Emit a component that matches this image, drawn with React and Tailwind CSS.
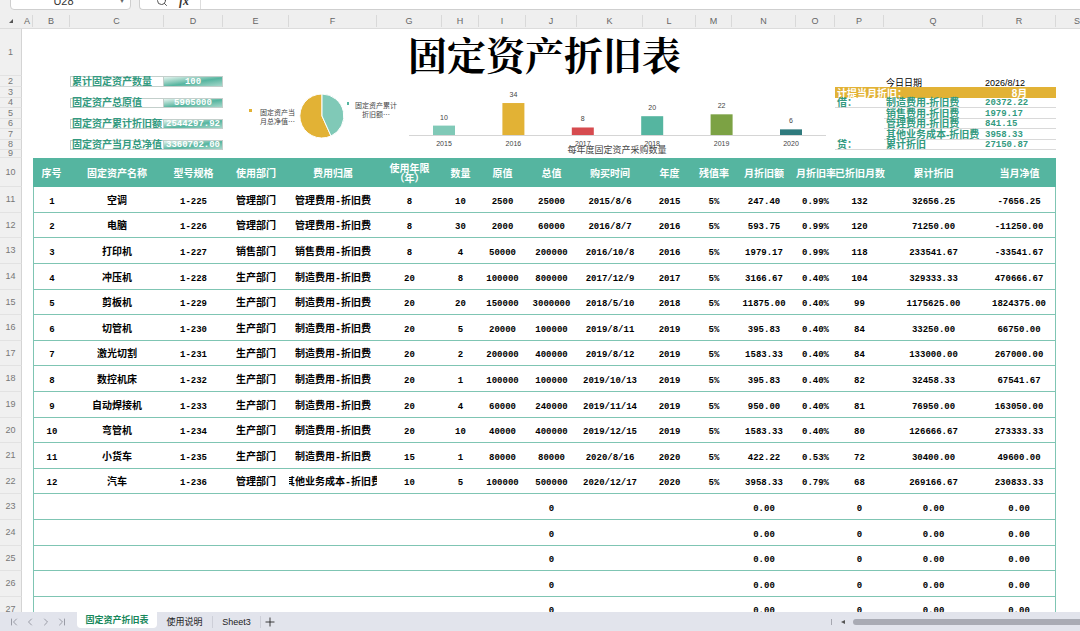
import { ChevronFirst, ChevronLast, ChevronLeft, ChevronRight, Plus, Search } from 'lucide-react'
import clsx from 'clsx'

const columns = [
  { letter: 'A', width: 'w-[11px]' },
  { letter: 'B', width: 'w-[37px]' },
  { letter: 'C', width: 'w-[94px]' },
  { letter: 'D', width: 'w-[59px]' },
  { letter: 'E', width: 'w-[66px]' },
  { letter: 'F', width: 'w-[88px]' },
  { letter: 'G', width: 'w-[65px]' },
  { letter: 'H', width: 'w-[37px]' },
  { letter: 'I', width: 'w-[47px]' },
  { letter: 'J', width: 'w-[51px]' },
  { letter: 'K', width: 'w-[66px]' },
  { letter: 'L', width: 'w-[53px]' },
  { letter: 'M', width: 'w-[36px]' },
  { letter: 'N', width: 'w-[64px]' },
  { letter: 'O', width: 'w-[39px]' },
  { letter: 'P', width: 'w-[49px]' },
  { letter: 'Q', width: 'w-[99px]' },
  { letter: 'R', width: 'w-[73px]' },
  { letter: 'S', width: 'w-[24px]' },
]

const headings = [
  '序号', '固定资产名称', '型号规格', '使用部门', '费用归属', '使用年限（年）', '数量', '原值', '总值',
  '购买时间', '年度', '残值率', '月折旧额', '月折旧率', '已折旧月数', '累计折旧', '当月净值',
]

const blank = ['', '', '', '', '', '', '', '', '0', '', '', '', '0.00', '', '0', '0.00', '0.00']

const assets = [
  ['1', '空调', '1-225', '管理部门', '管理费用-折旧费', '8', '10', '2500', '25000', '2015/8/6', '2015', '5%', '247.40', '0.99%', '132', '32656.25', '-7656.25'],
  ['2', '电脑', '1-226', '管理部门', '管理费用-折旧费', '8', '30', '2000', '60000', '2016/8/7', '2016', '5%', '593.75', '0.99%', '120', '71250.00', '-11250.00'],
  ['3', '打印机', '1-227', '销售部门', '销售费用-折旧费', '8', '4', '50000', '200000', '2016/10/8', '2016', '5%', '1979.17', '0.99%', '118', '233541.67', '-33541.67'],
  ['4', '冲压机', '1-228', '生产部门', '制造费用-折旧费', '20', '8', '100000', '800000', '2017/12/9', '2017', '5%', '3166.67', '0.40%', '104', '329333.33', '470666.67'],
  ['5', '剪板机', '1-229', '生产部门', '制造费用-折旧费', '20', '20', '150000', '3000000', '2018/5/10', '2018', '5%', '11875.00', '0.40%', '99', '1175625.00', '1824375.00'],
  ['6', '切管机', '1-230', '生产部门', '制造费用-折旧费', '20', '5', '20000', '100000', '2019/8/11', '2019', '5%', '395.83', '0.40%', '84', '33250.00', '66750.00'],
  ['7', '激光切割', '1-231', '生产部门', '制造费用-折旧费', '20', '2', '200000', '400000', '2019/8/12', '2019', '5%', '1583.33', '0.40%', '84', '133000.00', '267000.00'],
  ['8', '数控机床', '1-232', '生产部门', '制造费用-折旧费', '20', '1', '100000', '100000', '2019/10/13', '2019', '5%', '395.83', '0.40%', '82', '32458.33', '67541.67'],
  ['9', '自动焊接机', '1-233', '生产部门', '制造费用-折旧费', '20', '4', '60000', '240000', '2019/11/14', '2019', '5%', '950.00', '0.40%', '81', '76950.00', '163050.00'],
  ['10', '弯管机', '1-234', '生产部门', '制造费用-折旧费', '20', '10', '40000', '400000', '2019/12/15', '2019', '5%', '1583.33', '0.40%', '80', '126666.67', '273333.33'],
  ['11', '小货车', '1-235', '生产部门', '制造费用-折旧费', '15', '1', '80000', '80000', '2020/8/16', '2020', '5%', '422.22', '0.53%', '72', '30400.00', '49600.00'],
  ['12', '汽车', '1-236', '管理部门', '其他业务成本-折旧费', '10', '5', '100000', '500000', '2020/12/17', '2020', '5%', '3958.33', '0.79%', '68', '269166.67', '230833.33'],
  blank, blank, blank, blank, blank,
]

// rows 2 to 9: totals on the left, journal entry on the right
const summaryRows = [
  { row: 2, height: 'h-[11px]', label: '累计固定资产数量', total: '100' },
  { row: 3, height: 'h-[11px]' },
  { row: 4, height: 'h-[10px]', label: '固定资产总原值', total: '5905000', side: '借：', account: '制造费用-折旧费', amount: '20372.22' },
  { row: 5, height: 'h-[11px]', account: '销售费用-折旧费', amount: '1979.17' },
  { row: 6, height: 'h-[10px]', label: '固定资产累计折旧额', total: '2544297.92', account: '管理费用-折旧费', amount: '841.15' },
  { row: 7, height: 'h-[11px]', account: '其他业务成本-折旧费', amount: '3958.33' },
  { row: 8, height: 'h-[10px]', label: '固定资产当月总净值', total: '3360702.00', side: '贷：', account: '累计折旧', amount: '27150.87' },
  { row: 9, height: 'h-[8px]' },
]

const purchases = [
  { year: '2015', count: 10, color: '#80c9b7' },
  { year: '2016', count: 34, color: '#e2b235' },
  { year: '2017', count: 8, color: '#d64b4f' },
  { year: '2018', count: 20, color: '#55b5a0' },
  { year: '2019', count: 22, color: '#7ca244' },
  { year: '2020', count: 6, color: '#2f7a7d' },
]

function RowNumber({ children }) {
  return (
    <th scope="row" className="border-r border-b border-r-[#d4d4d4] border-b-[#e2e2e2] bg-[#f0f0f0] text-[9px] leading-[7px] font-normal text-[#777]">
      {children}
    </th>
  )
}

function PieChart() {
  return (
    <svg viewBox="0 0 186 80" className="h-20 w-[186px] shrink-0" fontSize="7" fill="#444">
      <path d="M99 40V18A22 22 0 1 0 108 60Z" fill="#e2b235" stroke="#fff" />
      <path d="M99 40V18A22 22 0 0 1 108 60Z" fill="#80c9b7" stroke="#fff" />
      <rect x="26" y="33" width="3" height="3" fill="#e2b235" />
      <text x="37" y="39">固定资产当</text>
      <text x="37" y="48">月总净值⋯</text>
      <rect x="124" y="26" width="2" height="3" fill="#55b5a0" />
      <text x="132" y="32">固定资产累计</text>
      <text x="139" y="41">折旧额⋯</text>
    </svg>
  )
}

function BarChart() {
  return (
    <svg viewBox="0 0 426 80" className="h-20 min-w-0 flex-1" fill="#444" textAnchor="middle">
      <path d="M0 59.5H417" stroke="#d5d5d5" />
      {purchases.map(({ year, count, color }, i) => {
        const x = 35 + i * 69.4
        const height = count * 0.94
        return (
          <g key={year} fontSize="7">
            <rect x={x - 11} y={59 - height} width="22" height={height} fill={color} />
            <text x={x} y={53 - height}>{count}</text>
            <text x={x} y="70">{year}</text>
          </g>
        )
      })}
      <text x="208" y="77" fontSize="9">每年度固定资产采购数量</text>
    </svg>
  )
}

function SummaryRow({ row, height, label, total, side, account, amount }) {
  return (
    <tr className={clsx(height, 'text-[10px] leading-[8px] font-bold whitespace-nowrap text-[#339a80]')}>
      <RowNumber>{row}</RowNumber>
      <td colSpan={2} />
      <td className={clsx(label && 'border border-[#c3cfcb] pl-px')}>{label}</td>
      <td
        className={clsx(
          total &&
            'border-y border-r border-[#c3cfcb] bg-linear-to-br from-[#e3f4ef] via-[#55b5a0] via-55% to-[#a5d8cb] text-center font-[Liberation_Mono,monospace] text-[9px] text-white',
        )}
      >
        {total}
      </td>
      {row === 2 && (
        <td rowSpan={8} colSpan={11} className="align-top font-normal">
          <div className="flex">
            <PieChart />
            <BarChart />
          </div>
        </td>
      )}
      {row === 2 && (
        <>
          <td />
          <td className="pt-0.5 pl-0.5 text-[9px] font-normal text-black">今日日期</td>
          <td className="pt-0.5 pl-0.5 text-[9px] font-normal text-black">2026/8/12</td>
        </>
      )}
      {row === 3 && (
        <>
          <td colSpan={2} className="bg-[#e2b235] pt-0.5 pl-0.5 text-white">计提当月折旧：</td>
          <td className="bg-[#e2b235] pt-0.5 text-center text-white">8月</td>
        </>
      )}
      {account && (
        <>
          <td className={clsx('pt-px pl-0.5', side && 'border-b border-[#d9d9d9]')}>{side}</td>
          <td className="border-b border-[#d9d9d9] pt-px pl-0.5">{account}</td>
          <td className="border-b border-[#d9d9d9] pt-px pl-0.5 font-[Liberation_Mono,monospace] text-[9px]">{amount}</td>
        </>
      )}
      {row === 9 && <td colSpan={3} />}
      <td />
    </tr>
  )
}

function AssetRow({ row, cells }) {
  return (
    <tr className="h-[26px] text-[9px] leading-3 font-bold text-black nth-[5n]:h-[25px] nth-[5n+2]:h-[25px]">
      <RowNumber>{row}</RowNumber>
      <td />
      {cells.map((cell, i) => (
        <td
          key={i}
          className={clsx(
            'border-b border-[#7fc5b3] pt-1 font-[Liberation_Mono,Noto_Sans_CJK_SC,monospace]',
            i === 0 && 'border-l',
            i === cells.length - 1 && 'border-r',
          )}
        >
          <div
            className={clsx(
              'flex justify-center overflow-x-clip whitespace-nowrap',
              [1, 3, 4].includes(i) && 'text-[10px]',
            )}
          >
            {cell}
          </div>
        </td>
      ))}
      <td />
    </tr>
  )
}

function Toolbar() {
  return (
    <div className="flex h-[10px] shrink-0 items-end gap-2 overflow-hidden pl-2.5">
      <div className="flex h-[18px] w-[121px] shrink-0 items-center rounded border border-[#cfcfcf] bg-white pr-1.5">
        <input
          aria-label="名称框"
          defaultValue="U28"
          className="w-full min-w-0 pr-2 pl-1 text-center text-[11px] text-[#333] outline-none"
        />
        <span className="text-[8px] text-[#666]">▾</span>
      </div>
      <div className="flex h-[18px] flex-1 items-center rounded-l border border-r-0 border-[#cfcfcf] bg-white pl-4">
        <button aria-label="查找">
          <Search className="size-3 text-[#555]" strokeWidth={2} />
        </button>
        <button aria-label="插入函数" className="ml-2 w-4 font-[Liberation_Serif,serif] text-xs leading-none font-bold text-[#333] italic">
          fx
        </button>
        <input aria-label="编辑栏" className="ml-2 h-full min-w-0 flex-1 border-l border-[#ddd] outline-none" />
      </div>
    </div>
  )
}

function SheetTabs() {
  return (
    <div className="flex h-[19px] shrink-0 items-center bg-[#e2e4ec] text-[9px] text-[#222]">
      <div className="flex w-[77px] shrink-0 items-center gap-1 pl-2 text-[#9a9ca6]">
        <button aria-label="第一张"><ChevronFirst className="size-3" strokeWidth={2} /></button>
        <button aria-label="上一张"><ChevronLeft className="size-3" strokeWidth={2} /></button>
        <button aria-label="下一张"><ChevronRight className="size-3" strokeWidth={2} /></button>
        <button aria-label="最后一张"><ChevronLast className="size-3" strokeWidth={2} /></button>
      </div>
      <button className="h-4 w-20 self-start rounded-b-sm bg-white pt-0.5 font-bold text-[#16875a]">固定资产折旧表</button>
      <button className="h-3 w-14 border-r border-[#cdcfd8] leading-3">使用说明</button>
      <button className="h-3 w-12 border-r border-[#cdcfd8] leading-3">Sheet3</button>
      <button aria-label="新建工作表" className="ml-0.5">
        <Plus className="size-3.5" strokeWidth={1.5} />
      </button>
      <div className="ml-auto flex items-center">
        <span className="h-1.5 w-px bg-[#a5a7b0]" />
        <button aria-label="向左滚动" className="flex w-[21px] justify-center">
          <svg viewBox="0 0 4 4" className="size-1" fill="#555">
            <path d="M4 0V4L0 2Z" />
          </svg>
        </button>
        <div className="h-1.5 w-[227px] rounded-l-full bg-[#a9abb4]" />
      </div>
    </div>
  )
}

export default function App() {
  return (
    <div className="flex h-screen flex-col overflow-hidden bg-[#f0f0f0] font-[Liberation_Sans,Noto_Sans_CJK_SC,sans-serif]">
      <Toolbar />
      <div className="min-h-0 flex-1 overflow-hidden bg-white">
        <table className="w-full table-fixed border-separate border-spacing-0">
          <colgroup>
            <col className="w-[22px]" />
            {columns.map(({ letter, width }) => (
              <col key={letter} className={width} />
            ))}
          </colgroup>
          <thead>
            <tr className="h-[19px] bg-[#efefef] text-[9px] leading-3 text-[#666]">
              <th className="border-b border-[#dcdcdc]">
                <svg viewBox="0 0 6 6" className="mx-auto mt-1 size-1" fill="#555">
                  <path d="M6 0V6H0Z" />
                </svg>
              </th>
              {columns.map(({ letter }) => (
                <th key={letter} scope="col" className="border-b border-[#dcdcdc] pt-1 font-normal">
                  <div className={letter === 'S' ? 'text-right' : 'border-r border-[#d9d9d9]'}>{letter}</div>
                </th>
              ))}
            </tr>
          </thead>
          <tbody>
            <tr className="h-[47px]">
              <RowNumber>1</RowNumber>
              <td />
              <td colSpan={17}>
                <h1 className="text-center font-[Noto_Serif_CJK_SC,Noto_Sans_CJK_SC,serif] text-[39px] leading-[46px] font-bold text-black">
                  固定资产折旧表
                </h1>
              </td>
              <td />
            </tr>
            {summaryRows.map((item) => (
              <SummaryRow key={item.row} {...item} />
            ))}
            <tr className="h-[29px] text-[10px] leading-[10px] text-white">
              <RowNumber>10</RowNumber>
              <td />
              {headings.map((heading) => (
                <th key={heading} scope="col" className="bg-[#55b5a0] pt-0.5 font-bold">
                  {heading === '使用年限（年）' ? <>使用年限<br />（年）</> : <span className="whitespace-nowrap">{heading}</span>}
                </th>
              ))}
              <td />
            </tr>
          </tbody>
          <tbody>
            {assets.map((cells, i) => (
              <AssetRow key={i} row={i + 11} cells={cells} />
            ))}
          </tbody>
        </table>
      </div>
      <SheetTabs />
    </div>
  )
}
